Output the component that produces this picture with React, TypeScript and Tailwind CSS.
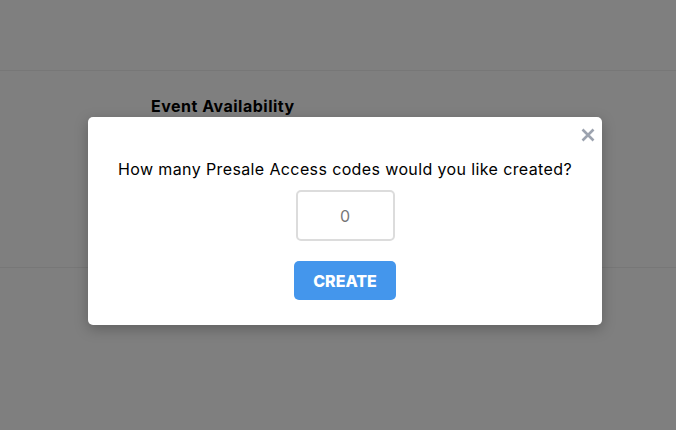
import React, { useState } from "react";

const App: React.FC = () => {
  const [count, setCount] = useState("");

  return (
    <div
      className="relative h-[430px] w-[676px] overflow-hidden bg-white"
      style={{ fontFamily: "Inter, 'Noto Sans', sans-serif" }}
    >
      {/* Page underneath the overlay */}
      <div className="h-[71px] border-b border-[#eeeeee]" />
      <div className="h-[197px] border-b border-[#eeeeee] pl-[151px] pt-[24px]">
        <h2 className="text-[16px] font-bold leading-[22px] tracking-[0.5px] text-black">Event Availability</h2>
      </div>

      {/* Overlay + modal */}
      <div className="absolute inset-0 bg-black/50">
        <div className="absolute left-[88px] top-[117px] h-[208px] w-[514px] rounded-[5px] bg-white shadow-[0_4px_14px_rgba(0,0,0,0.25)]">
          <button className="absolute right-[4px] top-[8px] text-[#9ca3af]">
            <svg width="20" height="20" viewBox="0 0 20 20" fill="none">
              <path d="M4.5 4.5L15.5 15.5M15.5 4.5L4.5 15.5" stroke="currentColor" strokeWidth="2.6" />
            </svg>
          </button>
          <div className="flex flex-col items-center pt-[40px]">
            <p className="text-[16px] leading-[24px] tracking-[0.38px] text-black">
              How many Presale Access codes would you like created?
            </p>
            <input
              value={count}
              onChange={(e) => setCount(e.target.value)}
              placeholder="0"
              className="mt-[9px] h-[51px] w-[99px] rounded-[5px] border-2 border-[#dcdcdc] text-center text-[16px] text-[#777] outline-none placeholder:text-[#777]"
            />
            <button className="mt-[20px] h-[39px] w-[102px] rounded-[5px] bg-[#4496ec] text-[16px] font-extrabold text-white">
              CREATE
            </button>
          </div>
        </div>
      </div>
    </div>
  );
};

export default App;
